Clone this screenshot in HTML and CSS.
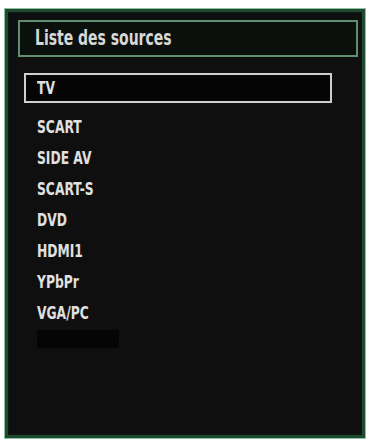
FILE: index.html
```html
<!DOCTYPE html>
<html>
<head>
<meta charset="utf-8">
<link rel="stylesheet" href="styles.css">
</head>
<body>
<div class="frame">
  <div class="title"><span class="label">Liste des sources</span></div>
  <div class="selected"><span class="label">TV</span></div>
  <ul class="list">
    <li><span class="label">SCART</span></li>
    <li><span class="label">SIDE AV</span></li>
    <li><span class="label">SCART-S</span></li>
    <li><span class="label">DVD</span></li>
    <li><span class="label">HDMI1</span></li>
    <li><span class="label">YPbPr</span></li>
    <li><span class="label">VGA/PC</span></li>
    <li class="blank"></li>
  </ul>
</div>
</body>
</html>
```
FILE: styles.css
```css
* { box-sizing: border-box; }
html, body { margin: 0; padding: 0; background: #ffffff; }
body { padding: 8px 0 0 4px; }
.frame {
  width: 362px;
  height: 431px;
  border: 1px solid #8fc0a0;
  box-shadow: inset 0 0 0 3px #1f4a2f, inset 0 0 0 4px #0c1a10;
  background: #0f0f0f;
  padding: 11px 7px 0 13px;
  display: flex;
  flex-direction: column;
  font-family: "DejaVu Sans Condensed", "DejaVu Sans", sans-serif;
  font-weight: bold;
  color: #e0e0e0;
}
.label {
  display: inline-block;
  transform-origin: left center;
  white-space: nowrap;
}
.title {
  height: 37px;
  border: 2px solid #5f8f6f;
  background: #0b100d;
  padding-left: 15px;
  font-size: 21px;
  line-height: 33px;
  color: #d8d8d8;
}
.title .label { transform: scaleX(0.74); }
.selected {
  margin: 16px 0 0 6px;
  width: 308px;
  height: 30px;
  border: 2px solid #cfcfcf;
  background: #050505;
  padding-left: 11px;
  font-size: 18px;
  line-height: 26px;
}
.selected .label { transform: scaleX(0.76); }
.list {
  list-style: none;
  margin: 8px 0 0 19px;
  padding: 0;
}
.list li {
  height: 31px;
  line-height: 31px;
  font-size: 18px;
}
.list .label { transform: scaleX(0.76); }
.list li.blank {
  width: 82px;
  height: 18px;
  margin-top: 2px;
  background: #050505;
}
```
